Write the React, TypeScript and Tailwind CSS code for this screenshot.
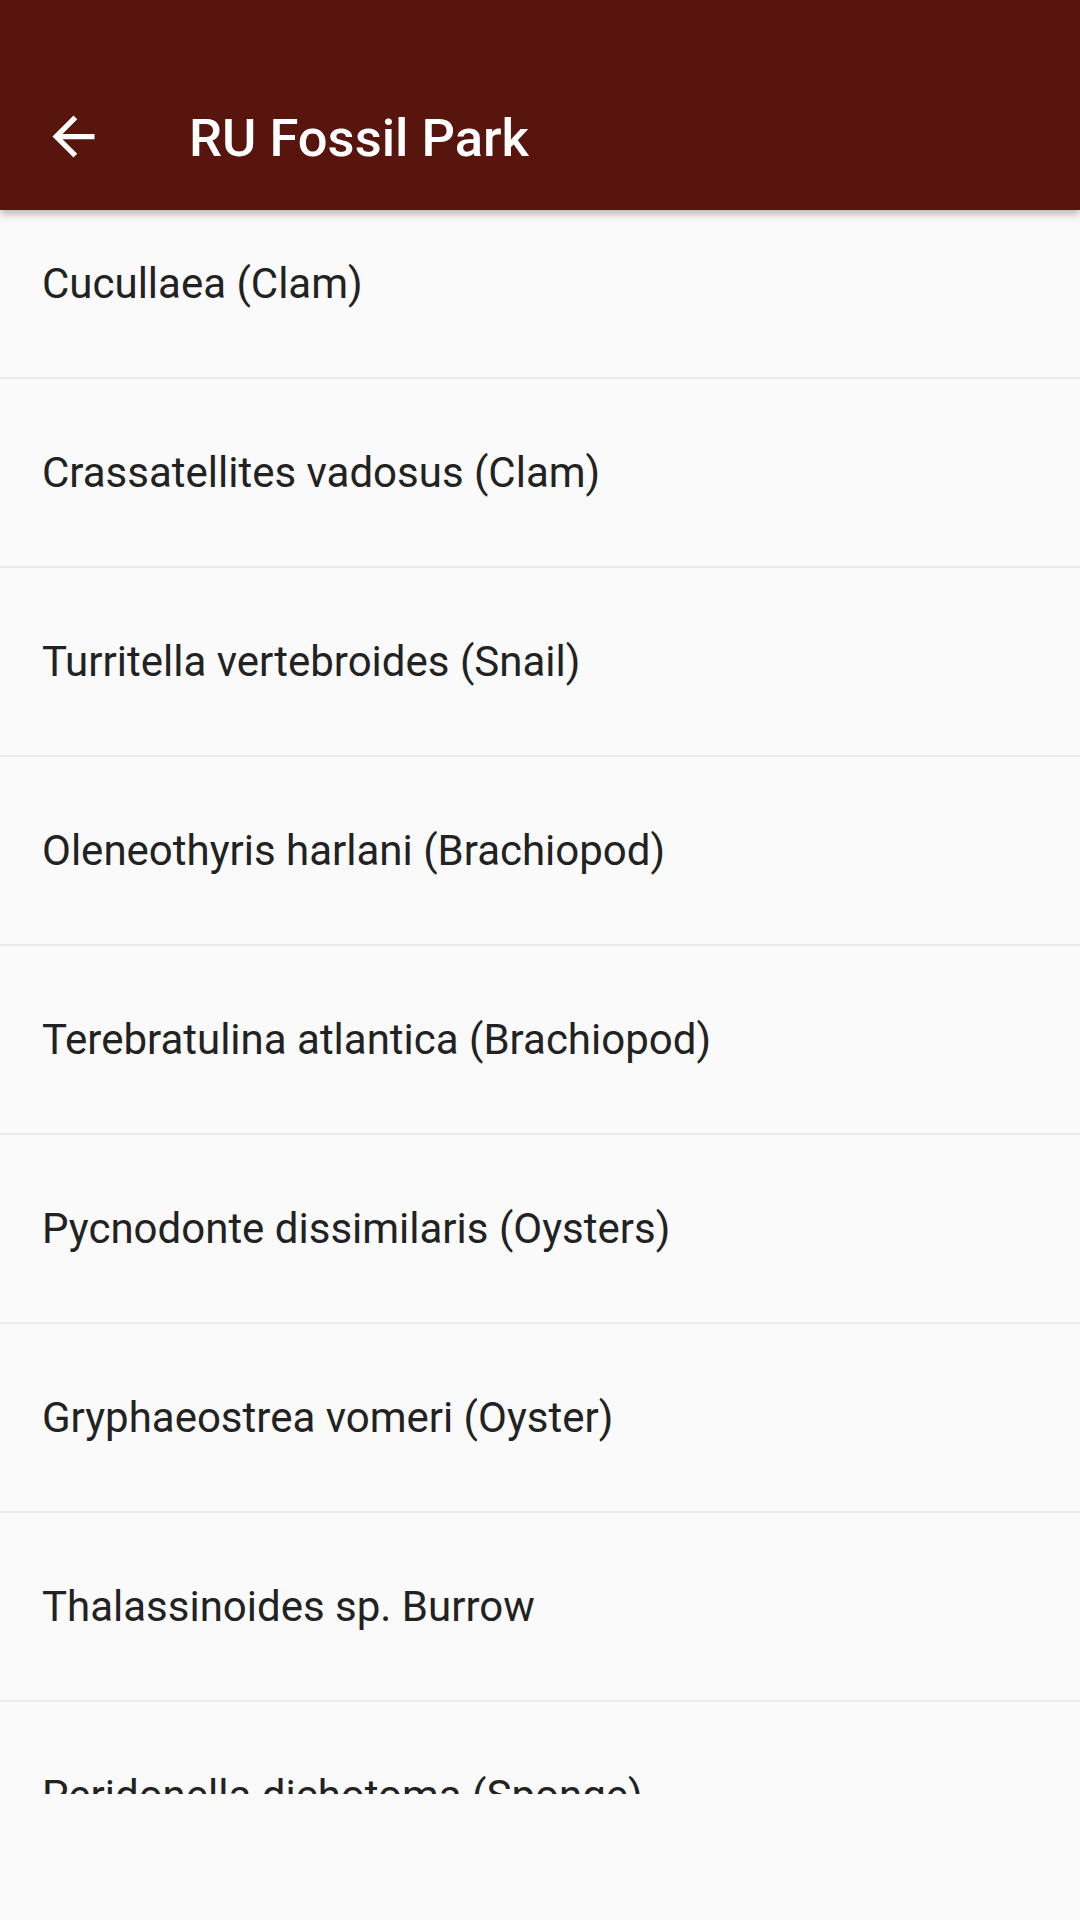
const fossils = [
  "Cucullaea (Clam)",
  "Crassatellites vadosus (Clam)",
  "Turritella vertebroides (Snail)",
  "Oleneothyris harlani (Brachiopod)",
  "Terebratulina atlantica (Brachiopod)",
  "Pycnodonte dissimilaris (Oysters)",
  "Gryphaeostrea vomeri (Oyster)",
  "Thalassinoides sp. Burrow",
  "Peridonella dichotoma (Sponge)",
];

function BackArrow() {
  return (
    <svg width="63" height="63" viewBox="0 0 24 24" fill="#ffffff">
      <path d="M20 11H7.83l5.59-5.59L12 4l-8 8 8 8 1.41-1.41L7.83 13H20v-2z" />
    </svg>
  );
}

export default function App() {
  return (
    <div
      className="w-[1080px] h-[1920px] bg-[#fafafa] flex flex-col overflow-hidden"
      style={{ fontFamily: "Roboto, 'Noto Sans', sans-serif" }}
    >
      {/* App bar with status bar space */}
      <header className="relative z-10 h-[210px] shrink-0 bg-[#57150e] pt-[63px] shadow-[0_4px_8px_rgba(0,0,0,0.28)]">
        <div className="h-[147px] flex items-center">
          <div className="w-[147px] h-[147px] flex items-center pl-[42px]">
            <BackArrow />
          </div>
          <h1 className="ml-[42px] text-[52.5px] leading-none font-medium text-white pt-[3px]">
            RU Fossil Park
          </h1>
        </div>
      </header>

      {/* Scrolled list */}
      <main className="h-[1584px] shrink-0 overflow-hidden">
        <ul className="-mt-[20px]">
          {fossils.map((name) => (
            <li
              key={name}
              className="h-[189px] flex items-center pl-[42px] border-b-2 border-[#ececec] text-[42px] leading-none text-[#222222]"
            >
              {name}
            </li>
          ))}
        </ul>
      </main>
    </div>
  );
}
